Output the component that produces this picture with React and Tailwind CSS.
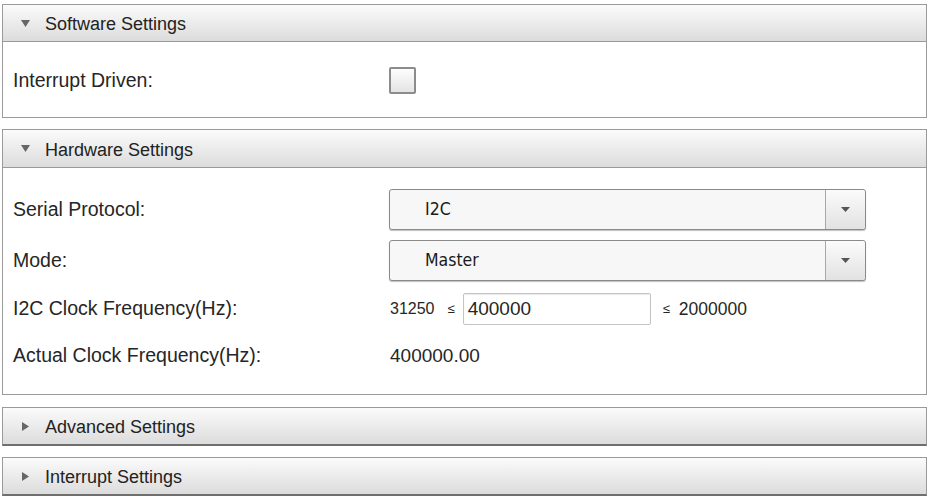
import React from "react";

function Tri({ open }) {
  return open ? (
    <svg width="9" height="7" viewBox="0 0 9 7" className="shrink-0">
      <path d="M0 0 L9 0 L4.5 7 Z" fill="#666" />
    </svg>
  ) : (
    <svg width="7" height="9" viewBox="0 0 7 9" className="shrink-0">
      <path d="M0 0 L7 4.5 L0 9 Z" fill="#666" />
    </svg>
  );
}

function Header({ title, open, h = "h-[38px]" }) {
  return (
    <div
      className={`${h} flex items-center border border-[#9a9a9a] ${
        open ? "" : "border-b-2 border-b-[#6f6f6f]"
      } bg-gradient-to-b from-[#fbfbfb] to-[#dcdcdc]`}
    >
      <div className="w-[42px] flex justify-center pl-[2px]">
        <Tri open={open} />
      </div>
      <span className="text-[18px] leading-none text-[#222] pt-[2px]">{title}</span>
    </div>
  );
}

function Select({ value }) {
  return (
    <div className="w-[477px] h-[41px] flex border border-[#8a8a8a] rounded-[3px] bg-[#f7f7f7] shadow-[0_1px_1px_rgba(0,0,0,0.25)]">
      <div
        className="flex-1 flex items-center pl-[35px] text-[17.5px] text-[#1a1a1a]"
        style={{ fontFamily: '"DejaVu Sans Condensed", "DejaVu Sans", sans-serif' }}
      >
        {value}
      </div>
      <div className="w-[40px] border-l border-[#a8a8a8] bg-gradient-to-b from-[#fbfbfb] to-[#e2e2e2] flex items-center justify-center rounded-r-[3px]">
        <svg width="9" height="5" viewBox="0 0 9 5">
          <path d="M0 0 L9 0 L4.5 5 Z" fill="#555" />
        </svg>
      </div>
    </div>
  );
}

export default function App() {
  return (
    <div
      className="w-[935px] h-[503px] bg-white pt-[4px] pl-[2px] flex flex-col text-[#262626]"
      style={{ fontFamily: '"Liberation Sans", Arial, sans-serif' }}
    >
      <div className="w-[925px]">
        <Header title="Software Settings" open />
        <div className="h-[76px] border border-t-0 border-[#9a9a9a] flex items-center pt-[2px]">
          <div className="w-[386px] pl-[10px] text-[19.5px]">Interrupt Driven:</div>
          <div className="w-[27px] h-[27px] border-2 border-[#8c8c8c] rounded-[2px] bg-gradient-to-b from-[#fdfdfd] to-[#e4e4e4]" />
        </div>
      </div>

      <div className="w-[925px] mt-[11px]">
        <Header title="Hardware Settings" open h="h-[39px]" />
        <div className="h-[227px] border border-t-0 border-[#9a9a9a] flex flex-col pt-[21px]">
          <div className="flex items-center h-[41px]">
            <div className="w-[386px] pl-[10px] text-[19.5px]">Serial Protocol:</div>
            <Select value="I2C" />
          </div>
          <div className="flex items-center h-[41px] mt-[10px]">
            <div className="w-[386px] pl-[10px] text-[19.5px]">Mode:</div>
            <Select value="Master" />
          </div>
          <div className="flex items-center h-[32px] mt-[12px]">
            <div className="w-[386px] pl-[10px] text-[19.5px]">I2C Clock Frequency(Hz):</div>
            <span className="text-[16px] ml-[1px]">31250</span>
            <span className="text-[13px] ml-[13px]">≤</span>
            <div className="ml-[8px] w-[188px] h-[32px] border border-[#c4c4c4] rounded-[2px] flex items-center pl-[4px] text-[19px] shadow-[inset_0_1px_1px_rgba(0,0,0,0.08)]">
              400000
            </div>
            <span className="text-[13px] ml-[12px]">≤</span>
            <span className="text-[17.5px] ml-[9px]">2000000</span>
          </div>
          <div className="flex items-center h-[32px] mt-[15px]">
            <div className="w-[386px] pl-[10px] text-[19.5px]">Actual Clock Frequency(Hz):</div>
            <span className="text-[19px] ml-[1px]">400000.00</span>
          </div>
        </div>
      </div>

      <div className="w-[925px] mt-[12px]">
        <Header title="Advanced Settings" h="h-[39px]" />
      </div>
      <div className="w-[925px] mt-[11px]">
        <Header title="Interrupt Settings" h="h-[39px]" />
      </div>
    </div>
  );
}
